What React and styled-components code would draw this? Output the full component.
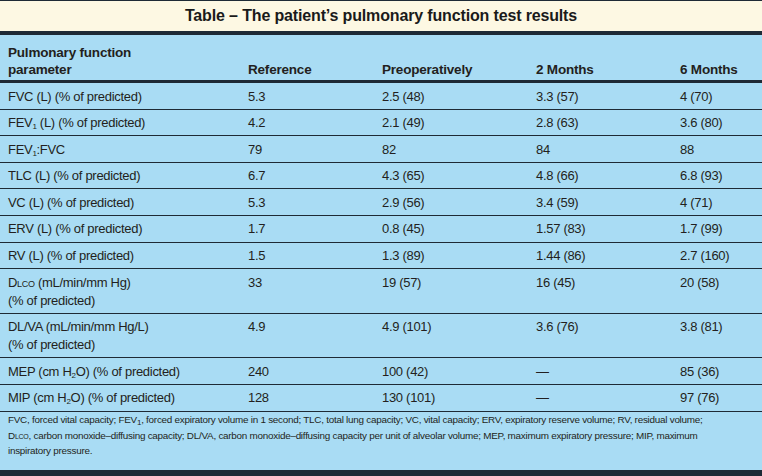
import React from "react";
import styled, { createGlobalStyle } from "styled-components";

const GlobalStyle = createGlobalStyle`
  html, body {
    margin: 0;
    padding: 0;
    background: #a9dcf4;
  }
  body {
    font-family: "Liberation Sans", Arial, sans-serif;
    color: #231f20;
  }
`;

const Frame = styled.div`
  width: 762px;
  height: 476px;
  background: #a9dcf4;
  border-top: 1px solid #1e2a35;
  box-sizing: border-box;
  overflow: hidden;
`;

const Title = styled.div`
  height: 30px;
  background: #fdf8e3;
  border-bottom: 4px solid #1e2a35;
  display: flex;
  align-items: center;
  justify-content: center;
  font-size: 16px;
  font-weight: bold;
  letter-spacing: -0.15px;
  color: #1a1a1a;
`;

const Table = styled.table`
  width: 100%;
  border-collapse: collapse;
  table-layout: fixed;
  font-size: 13px;
  letter-spacing: -0.3px;
`;

const HeadCell = styled.th`
  box-sizing: border-box;
  text-align: left;
  vertical-align: bottom;
  font-weight: bold;
  font-size: 13.5px;
  line-height: 17px;
  letter-spacing: -0.2px;
  padding: 8.5px 8px 2.5px;
  border-bottom: 3px solid #1e2a35;
  width: ${(p) => p.$w || "auto"};
`;

const Cell = styled.td`
  vertical-align: top;
  line-height: 18px;
  padding: 4.5px 8px 3.1px;
  border-bottom: 1px solid #1e2a35;
  white-space: nowrap;
`;

const Sub = styled.sub`
  font-size: 8px;
  vertical-align: -2px;
  line-height: 0;
`;

const SmallCaps = styled.span`
  font-variant: small-caps;
`;

const Note = styled.div`
  box-sizing: border-box;
  font-size: 9.9px;
  line-height: 15.5px;
  letter-spacing: -0.25px;
  white-space: nowrap;
  padding: 0.8px 8px 0;
  height: 64.4px;
  border-bottom: 6px solid #1e2a35;
`;

const FEV1 = () => (
  <>
    FEV<Sub>1</Sub>
  </>
);

const H2O = () => (
  <>
    H<Sub>2</Sub>O
  </>
);

const rows = [
  { p: "FVC (L) (% of predicted)", v: ["5.3", "2.5 (48)", "3.3 (57)", "4 (70)"] },
  { p: <><FEV1 /> (L) (% of predicted)</>, v: ["4.2", "2.1 (49)", "2.8 (63)", "3.6 (80)"] },
  { p: <><FEV1 />:FVC</>, v: ["79", "82", "84", "88"] },
  { p: "TLC (L) (% of predicted)", v: ["6.7", "4.3 (65)", "4.8 (66)", "6.8 (93)"] },
  { p: "VC (L) (% of predicted)", v: ["5.3", "2.9 (56)", "3.4 (59)", "4 (71)"] },
  { p: "ERV (L) (% of predicted)", v: ["1.7", "0.8 (45)", "1.57 (83)", "1.7 (99)"] },
  { p: "RV (L) (% of predicted)", v: ["1.5", "1.3 (89)", "1.44 (86)", "2.7 (160)"] },
  {
    p: <>D<SmallCaps>lco</SmallCaps> (mL/min/mm Hg)<br />(% of predicted)</>,
    v: ["33", "19 (57)", "16 (45)", "20 (58)"],
  },
  {
    p: <>DL/VA (mL/min/mm Hg/L)<br />(% of predicted)</>,
    v: ["4.9", "4.9 (101)", "3.6 (76)", "3.8 (81)"],
  },
  { p: <>MEP (cm <H2O />) (% of predicted)</>, v: ["240", "100 (42)", "—", "85 (36)"] },
  { p: <>MIP (cm <H2O />) (% of predicted)</>, v: ["128", "130 (101)", "—", "97 (76)"] },
];

export default function App() {
  return (
    <>
      <GlobalStyle />
      <Frame>
        <Title>Table – The patient’s pulmonary function test results</Title>
        <Table>
          <thead>
            <tr>
              <HeadCell $w="240px">Pulmonary function<br />parameter</HeadCell>
              <HeadCell $w="134px">Reference</HeadCell>
              <HeadCell $w="154px">Preoperatively</HeadCell>
              <HeadCell $w="144px">2 Months</HeadCell>
              <HeadCell>6 Months</HeadCell>
            </tr>
          </thead>
          <tbody>
            {rows.map((r, i) => (
              <tr key={i}>
                <Cell>{r.p}</Cell>
                {r.v.map((v, j) => (
                  <Cell key={j}>{v}</Cell>
                ))}
              </tr>
            ))}
          </tbody>
        </Table>
        <Note>
          FVC, forced vital capacity; <FEV1 />, forced expiratory volume in 1 second; TLC, total lung capacity; VC, vital capacity; ERV, expiratory reserve volume; RV, residual volume;
          <br />
          D<SmallCaps>lco</SmallCaps>, carbon monoxide–diffusing capacity; DL/VA, carbon monoxide–diffusing capacity per unit of alveolar volume; MEP, maximum expiratory pressure; MIP, maximum
          <br />
          inspiratory pressure.
        </Note>
      </Frame>
    </>
  );
}
